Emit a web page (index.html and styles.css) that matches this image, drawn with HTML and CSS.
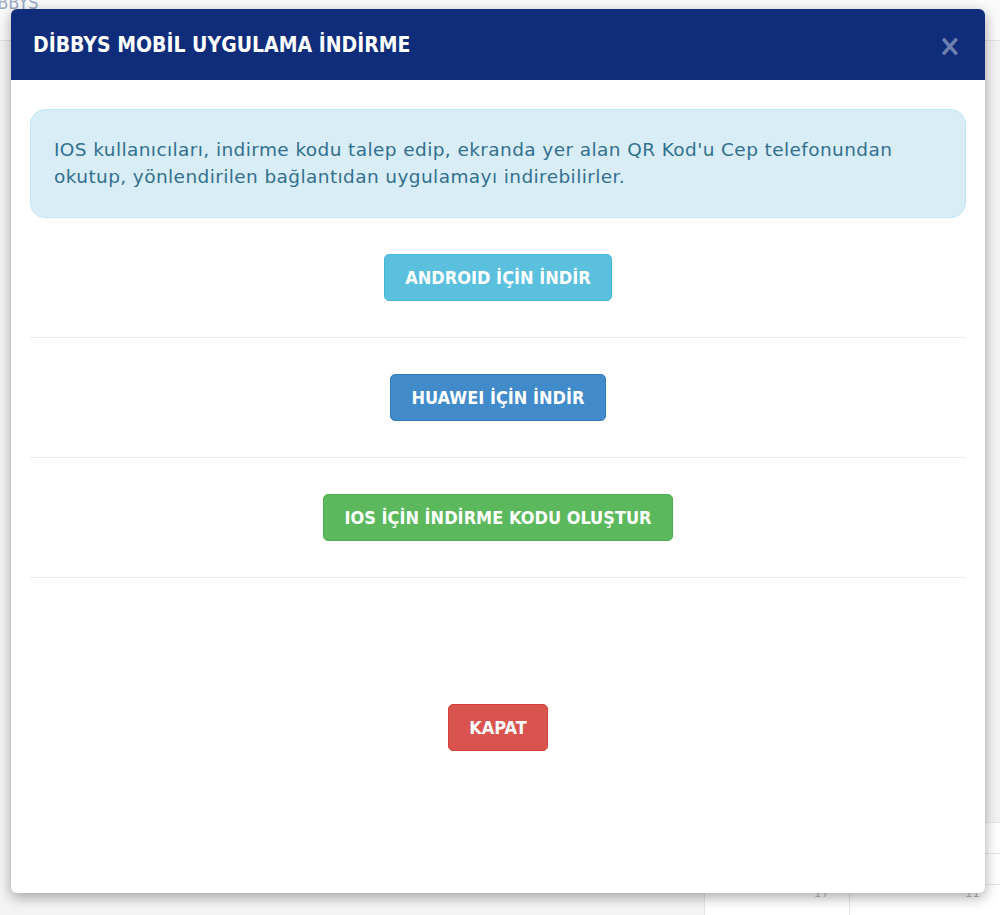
FILE: index.html
```html
<!DOCTYPE html>
<html lang="tr">
<head>
    <meta charset="UTF-8">
    <title>DİBBYS Mobil Uygulama</title>
    <link rel="stylesheet" href="styles.css">
</head>
<body>

    <div class="page">
        <div class="page-top">
            <span class="brand">DİBBYS</span>
        </div>
        <div class="page-table">
            <div class="cell"></div><div class="cell"></div>
            <div class="cell"></div><div class="cell"></div>
            <div class="cell"><span>17</span></div><div class="cell"><span>11</span></div>
        </div>
    </div>

    <div class="modal">
        <div class="modal-header">
            <h4>DİBBYS MOBİL UYGULAMA İNDİRME</h4>
            <span class="close">&times;</span>
        </div>
        <div class="modal-body">
            <div class="alert">
                IOS kullanıcıları, indirme kodu talep edip, ekranda yer alan QR Kod'u Cep telefonundan<br>
                okutup, yönlendirilen bağlantıdan uygulamayı indirebilirler.
            </div>

            <div class="row">
                <button class="btn btn-info">ANDROID İÇİN İNDİR</button>
            </div>
            <div class="row">
                <button class="btn btn-primary">HUAWEI İÇİN İNDİR</button>
            </div>
            <div class="row">
                <button class="btn btn-success">IOS İÇİN İNDİRME KODU OLUŞTUR</button>
            </div>

            <div class="footer">
                <button class="btn btn-danger">KAPAT</button>
            </div>
        </div>
    </div>

</body>
</html>
```

FILE: styles.css
```css
body {
    margin: 0;
    font-family: 'DejaVu Sans Condensed', 'DejaVu Sans', sans-serif;
    background-color: #f4f4f4;
    height: 915px;
    overflow: hidden;
    position: relative;
}

/* page behind the modal */
.page {
    height: 100%;
    display: flex;
    flex-direction: column;
    justify-content: space-between;
}

.page-top {
    height: 40px;
    background: #fafafa;
    border-bottom: 1px solid #e2e2e2;
    overflow: hidden;
}

.brand {
    display: block;
    margin: -8px 0 0 -20px;
    font-size: 18px;
    color: #9aa9c4;
}

.page-table {
    margin-left: auto;
    width: 296px;
    display: grid;
    grid-template-columns: 145px 151px;
    background: #fff;
}

.page-table .cell {
    height: 30px;
    border-left: 1px solid #e6e6e6;
    border-top: 1px solid #e6e6e6;
    font-size: 13px;
    color: #bbb;
    text-align: right;
    padding-right: 20px;
}

/* Modal */
.modal {
    position: absolute;
    top: 9px;
    left: 11px;
    width: 974px;
    height: 884px;
    background: #fff;
    border-radius: 6px;
    box-shadow: 0 4px 14px rgba(0, 0, 0, 0.35);
    overflow: hidden;
}

.modal-header {
    height: 71px;
    background: #0f2d7a;
    display: flex;
    align-items: center;
    justify-content: space-between;
    padding: 0 24px 0 22px;
}

.modal-header h4 {
    margin: 0;
    color: #fff;
    font-size: 21px;
    font-weight: 700;
}

.close {
    color: #6e80b0;
    font-size: 30px;
    font-weight: 700;
    line-height: 1;
    margin-top: 2px;
}

.modal-body {
    padding: 29px 19px 0;
}

.alert {
    background: #d9edf7;
    border: 1px solid #bce8f1;
    border-radius: 15px;
    color: #31708f;
    font-family: 'DejaVu Sans', sans-serif;
    font-size: 18.5px;
    letter-spacing: 0.4px;
    line-height: 27px;
    padding: 26px 23px 27px;
    white-space: nowrap;
}

.row {
    padding: 36px 0 36px;
    border-bottom: 1px solid #eaeaea;
    text-align: center;
}

.footer {
    padding-top: 126px;
    text-align: center;
}

/* Buttons */
.btn {
    font-family: 'DejaVu Sans Condensed', 'DejaVu Sans', sans-serif;
    font-size: 18px;
    font-weight: 700;
    color: #fff;
    height: 47px;
    padding: 0 20px;
    border-radius: 5px;
    border: 1px solid transparent;
    cursor: pointer;
}

.btn-info {
    background: #5bc0de;
    border-color: #46b8da;
}

.btn-primary {
    background: #428bca;
    border-color: #357ebd;
}

.btn-success {
    background: #5cb85c;
    border-color: #4cae4c;
}

.btn-danger {
    background: #d9534f;
    border-color: #d43f3a;
}
```
